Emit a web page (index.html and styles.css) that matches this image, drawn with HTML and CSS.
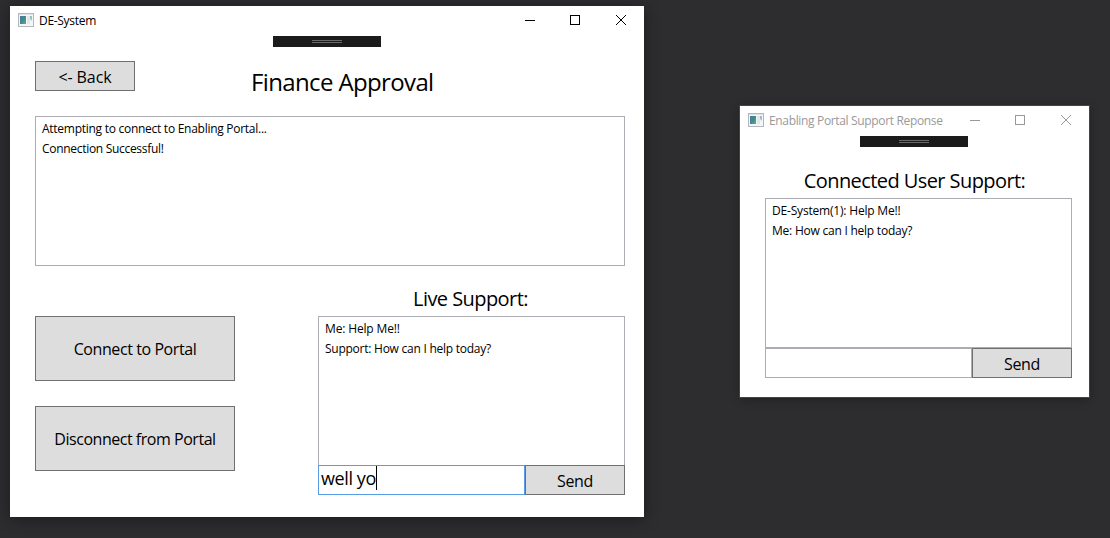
FILE: index.html
```html
<!DOCTYPE html>
<html lang="en">
<head>
<meta charset="utf-8">
<title>DE-System</title>
<link rel="stylesheet" href="styles.css">
</head>
<body>
<svg class="defs" width="0" height="0" aria-hidden="true">
  <defs>
    <linearGradient id="pane" x1="0" y1="0" x2="1" y2="1">
      <stop offset="0" stop-color="#4a78a4"/>
      <stop offset="0.5" stop-color="#3f8a8a"/>
      <stop offset="1" stop-color="#5fb07c"/>
    </linearGradient>
    <linearGradient id="slice" x1="0" y1="0" x2="1" y2="1">
      <stop offset="0" stop-color="#8fb4cc"/>
      <stop offset="1" stop-color="#a4d4b4"/>
    </linearGradient>
    <symbol id="app" viewBox="0 0 16 14">
      <rect x="0.5" y="0.5" width="15" height="13" fill="#f4f5f7" stroke="#b4b8be"/>
      <path d="M1 1.5H15" stroke="#dfe3e8"/>
      <rect x="2" y="3" width="6" height="8" fill="url(#pane)"/>
      <rect x="9" y="3" width="3" height="8" fill="#e3e5e7"/>
      <path d="M12 3H14V8L12 6Z" fill="url(#slice)"/>
    </symbol>
    <symbol id="min" viewBox="0 0 10 10"><path d="M0 5.5H10" stroke="currentColor"/></symbol>
    <symbol id="max" viewBox="0 0 10 10"><rect x="0.5" y="0.5" width="9" height="9" fill="none" stroke="currentColor"/></symbol>
    <symbol id="close" viewBox="0 0 10 10"><path d="M0 0L10 10M10 0L0 10" stroke="currentColor" fill="none"/></symbol>
  </defs>
</svg>
<main class="desktop">
  <section class="window main-window">
    <header class="titlebar">
      <svg class="app-icon"><use href="#app"/></svg>
      <span class="title title-main">DE-System</span>
      <span class="control minimize"><svg class="glyph"><use href="#min"/></svg></span>
      <span class="control"><svg class="glyph"><use href="#max"/></svg></span>
      <span class="control"><svg class="glyph"><use href="#close"/></svg></span>
    </header>
    <div class="debug-bar"><span class="grip"></span></div>
    <div class="heading-row">
      <button class="button back"><span class="t-back">&lt;- Back</span></button>
      <h1 class="heading"><span class="t-heading">Finance Approval</span></h1>
    </div>
    <div class="list log">
      <p class="item"><span class="t-attempt">Attempting to connect to Enabling Portal...</span></p>
      <p class="item"><span class="t-success">Connection Successful!</span></p>
    </div>
    <div class="lower">
      <div class="actions">
        <button class="button action"><span class="t-connect">Connect to Portal</span></button>
        <button class="button action"><span class="t-disconnect">Disconnect from Portal</span></button>
      </div>
      <div class="chat">
        <h2 class="subheading"><span class="t-live">Live Support:</span></h2>
        <div class="list messages">
          <p class="item"><span class="t-me">Me: Help Me!!</span></p>
          <p class="item"><span class="t-support">Support: How can I help today?</span></p>
        </div>
        <div class="compose">
          <div class="field focused"><span class="t-input">well yo</span><span class="caret"></span></div>
          <button class="button send"><span class="t-send">Send</span></button>
        </div>
      </div>
    </div>
  </section>
  <section class="window support-window">
    <header class="titlebar">
      <svg class="app-icon"><use href="#app"/></svg>
      <span class="title title-support">Enabling Portal Support Reponse</span>
      <span class="control minimize"><svg class="glyph"><use href="#min"/></svg></span>
      <span class="control"><svg class="glyph"><use href="#max"/></svg></span>
      <span class="control"><svg class="glyph"><use href="#close"/></svg></span>
    </header>
    <div class="debug-bar"><span class="grip"></span></div>
    <div class="chat">
      <h2 class="subheading"><span class="t-connected">Connected User Support:</span></h2>
      <div class="list messages">
        <p class="item"><span class="t-de">DE-System(1): Help Me!!</span></p>
        <p class="item"><span class="t-how">Me: How can I help today?</span></p>
      </div>
      <div class="compose">
        <div class="field"></div>
        <button class="button send"><span class="t-send">Send</span></button>
      </div>
    </div>
  </section>
</main>
</body>
</html>
```
FILE: styles.css
```css
* { box-sizing: border-box; }
body { margin: 0; background: #2d2d30; color: #000; font-family: "Open Sans", "Noto Sans", sans-serif; font-size: 12px; }
h1, h2, p { margin: 0; font-weight: 400; }
span { white-space: nowrap; }
.defs { position: absolute; }
.desktop { position: relative; width: 1110px; height: 538px; overflow: hidden; }

.window { position: absolute; background: #fff; }
.main-window { left: 10px; top: 6px; width: 634px; height: 511px; box-shadow: 0 2px 14px rgba(0, 0, 0, .42); }
.support-window { left: 740px; top: 106px; width: 349px; height: 291px; box-shadow: 0 0 0 1px #434346, 0 2px 10px rgba(0, 0, 0, .3); }

.titlebar { display: flex; align-items: center; height: 30px; padding-left: 8px; }
.app-icon { width: 16px; height: 14px; margin: 0 5px 2px 0; flex: none; }
.title { flex: 1; line-height: 30px; }
.control { display: flex; justify-content: center; width: 46px; padding-bottom: 2px; flex: none; }
.minimize { padding-left: 2px; }
.glyph { width: 10px; height: 10px; flex: none; }
.support-window .titlebar { color: #999; }

.debug-bar { width: 108px; height: 11px; margin: 0 auto; padding: 4px 39px; background: #1b1b1c; }
.support-window .debug-bar { margin-left: 120px; }
.grip { display: block; height: 3px; border: solid #686868; border-width: 1px 0; }

.button { display: flex; align-items: center; justify-content: center; padding: 2px 0 0; border: 1px solid #707070; background: #ddd; color: #000; font: 16px "Open Sans", "Noto Sans", sans-serif; border-radius: 0; }
.heading-row { display: flex; margin: 14px 0 0 25px; height: 55px; }
.back { width: 100px; height: 30px; }
.heading { margin-left: 116px; padding-top: 4px; font-size: 24px; line-height: 33px; }

.list { border: 1px solid #abadb3; padding: 2px 6px; background: #fff; }
.item { height: 20px; line-height: 20px; }
.log { width: 590px; height: 150px; margin-left: 25px; }

.lower { display: flex; justify-content: space-between; padding: 0 19px 0 25px; }
.actions { display: flex; flex-direction: column; gap: 25px; padding-top: 50px; }
.action { width: 200px; height: 65px; padding-top: 1px; }
.chat { width: 307px; }
.lower .chat { padding-top: 16px; }
.support-window .chat { margin: 17px 0 0 25px; }
.subheading { height: 34px; padding-right: 2px; font-size: 20px; line-height: 34px; text-align: center; }
.support-window .subheading { padding-right: 8px; }
.messages { height: 150px; }
.compose { display: flex; height: 30px; }
.lower .compose { margin-top: -1px; }
.field { display: flex; width: 207px; padding: 0 2px; border: 1px solid #abadb3; background: #fff; font-size: 18px; line-height: 25px; }
.focused { position: relative; border-color: #569de5; }
.caret { width: 1px; height: 24px; background: #000; }
.send { width: 100px; }

/* Tracking per label */
.title-main { letter-spacing: -.3px; }
.title-support { letter-spacing: -.34px; }
.t-attempt { letter-spacing: -.27px; }
.t-success { letter-spacing: -.3px; }
.t-me { letter-spacing: -.15px; }
.t-support { letter-spacing: -.25px; }
.t-de { letter-spacing: -.19px; }
.t-how { letter-spacing: -.23px; }
.t-heading { letter-spacing: -.63px; }
.t-live { letter-spacing: -.56px; }
.t-connected { letter-spacing: -.58px; }
.t-input { letter-spacing: -.4px; }
.t-back { letter-spacing: -.1px; }
.t-connect { letter-spacing: -.42px; }
.t-disconnect { letter-spacing: -.47px; }
.t-send { letter-spacing: -.4px; }
```
